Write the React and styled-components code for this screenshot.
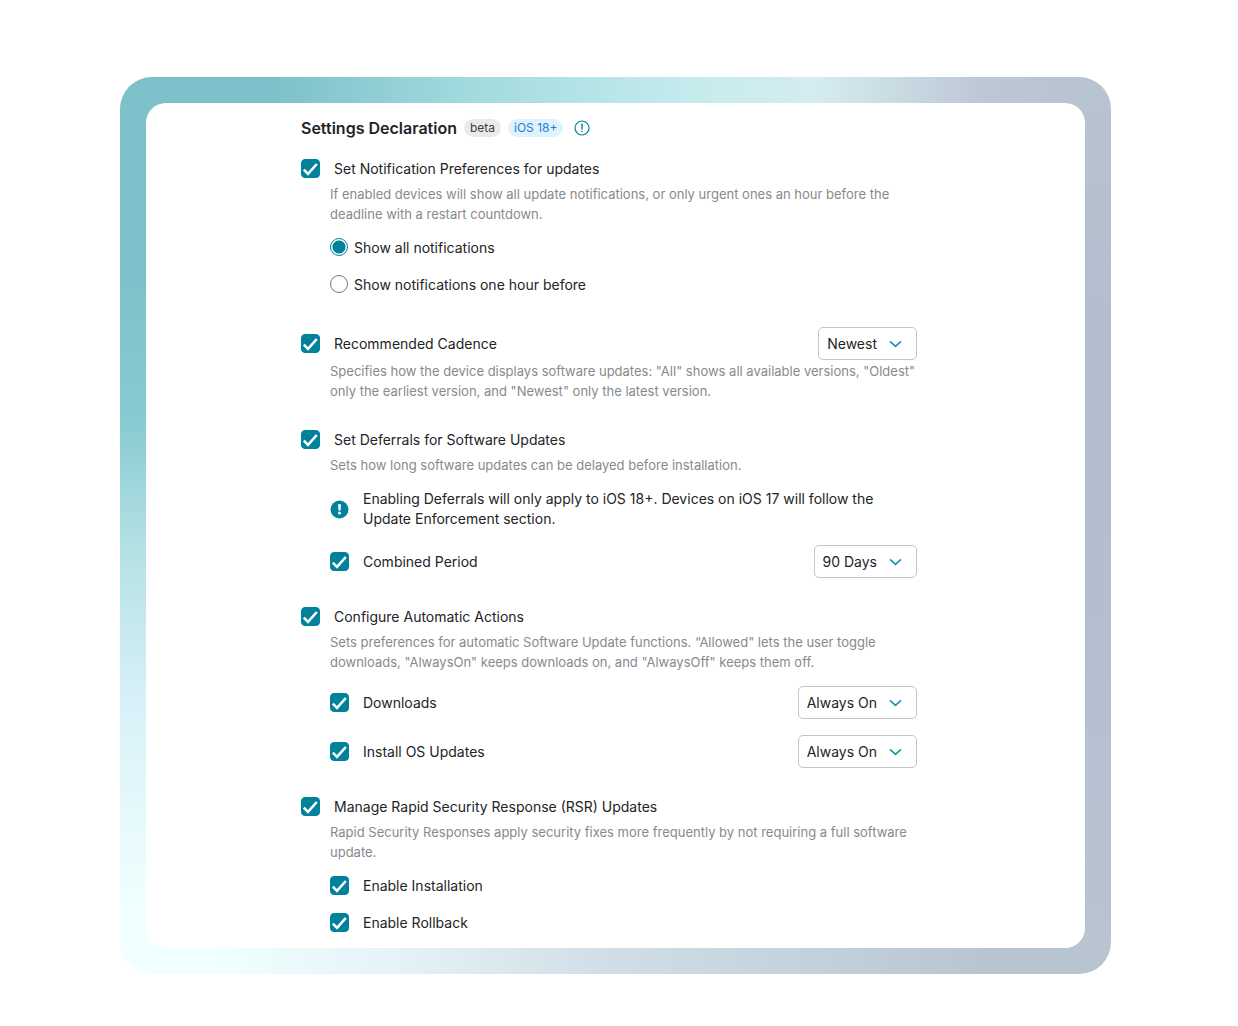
import React, { useId } from "react";
import styled, { createGlobalStyle, css } from "styled-components";

const teal = "#01829b";

const GlobalStyle = createGlobalStyle`
  *, *::before, *::after { box-sizing: border-box; }
  body {
    margin: 0;
    background: #fff;
    color: #222426;
    font: 400 14px/20px Inter, "Liberation Sans", sans-serif;
  }
`;

const Page = styled.main`
  padding: 77px 127px 52px 120px;
`;

const Frame = styled.div`
  padding: 26px;
  border-radius: 32px;
  background:
    linear-gradient(to right, #7fc1ca 13%, #a2dade 34%, #b6e5e8 48%, #c9ecee 61%, #d4ecf0 72%, #bec8d5 90%, #b9c4d1) 40px 0 / calc(100% - 80px) 40px no-repeat,
    linear-gradient(to right, #f0ffff 10%, #e6f3f9 27%, #d2dfe8 48%, #c2d0db 72%, #b9c4d1 88%) 0 100% / 100% 40px no-repeat,
    linear-gradient(to bottom, #7fc1ca 22%, #87cad1 38%, #b3e0e4 52%, #d8f1f8 70%, #f0ffff 92%) 0 0 / 40px 100% no-repeat,
    linear-gradient(to bottom, #b9c4d1, #b2bdce 28%, #b3bfd0 60%, #b9c4d1) 100% 0 / 40px 100% no-repeat;
`;

const Panel = styled.form`
  padding: 16px 168px 12px 155px;
  border-radius: 20px;
  background: #fff;
`;

const Header = styled.header`
  display: flex;
  align-items: center;
  gap: 7px;
  height: 18px;
  margin-bottom: 22px;
`;

const Title = styled.h1`
  margin: 0;
  font-size: 16px;
  font-weight: 600;
`;

const Badge = styled.span`
  padding: 0 6px;
  border-radius: 9px;
  font-size: 12px;
  line-height: 18px;
  color: ${(p) => (p.$info ? "#1b80cf" : "#3b3d3f")};
  background: ${(p) => (p.$info ? "#dff2fe" : "#e9eaea")};
`;

const InfoButton = styled.button`
  display: flex;
  margin: 0 0 0 4px;
  padding: 0;
  border: 0;
  background: none;
  color: ${teal};
`;

const Sections = styled.div`
  display: grid;
  gap: 29px;
`;

const Description = styled.p`
  margin: ${(p) => (p.$tight ? "1px" : "5px")} 0 0 29px;
  font-size: 13px;
  color: #878a8d;
`;

const Children = styled.div`
  display: grid;
  gap: ${(p) => (p.$roomy ? "17px" : "16px")};
  margin: 14px 0 0 29px;
  padding-bottom: ${(p) => (p.$roomy ? "3px" : "0")};
`;

const Row = styled.div`
  display: flex;
  align-items: center;
  justify-content: space-between;
`;

const OptionLabel = styled.label`
  display: flex;
  align-items: flex-start;
  gap: ${(p) => (p.$radio ? "6px" : "14px")};
`;

const stacked = css`
  grid-area: 1 / 1;
`;

const Stack = styled.span`
  display: grid;
  align-items: center;
  flex: none;
`;

const CheckInput = styled.input`
  ${stacked}
  appearance: none;
  width: 19px;
  height: 19px;
  margin: 0;
  border: 1px solid ${teal};
  border-radius: 4px;
  &:checked { background: ${teal}; }
  &:not(:checked) + svg { display: none; }
`;

const CheckMark = styled.svg`
  ${stacked}
  pointer-events: none;
`;

const RadioInput = styled.input`
  appearance: none;
  flex: none;
  width: 18px;
  height: 18px;
  margin: 0;
  border: 1px solid #74787b;
  border-radius: 50%;
  &:checked {
    border-color: ${teal};
    background: radial-gradient(circle, ${teal} 6px, #fff 7px);
  }
`;

const SelectInput = styled.select`
  ${stacked}
  appearance: none;
  field-sizing: content;
  height: 33px;
  margin: 0;
  padding: 0 39px 0 8px;
  border: 1px solid #c3c5c7;
  border-radius: 5px;
  background: #fff;
  color: inherit;
  font: inherit;
`;

const Chevron = styled.svg`
  ${stacked}
  justify-self: end;
  margin-right: 15px;
  pointer-events: none;
`;

const Notice = styled.div`
  display: flex;
  align-items: center;
  gap: 14px;
`;

const NoticeIcon = styled.svg`
  flex: none;
`;

const NoticeText = styled.p`
  margin: 0;
`;

function Check({ children }) {
  return (
    <OptionLabel>
      <Stack>
        <CheckInput type="checkbox" defaultChecked />
        <CheckMark width="19" height="19" viewBox="0 0 19 19" fill="none" aria-hidden="true">
          <path d="M2.8 10.6 7 14.8 15.8 5" stroke="#fff" strokeWidth="2.6" />
        </CheckMark>
      </Stack>
      {children}
    </OptionLabel>
  );
}

function Radio({ children, ...rest }) {
  return (
    <OptionLabel $radio>
      <RadioInput type="radio" name="notifications" {...rest} />
      {children}
    </OptionLabel>
  );
}

function Select({ label, value, options }) {
  const id = useId();
  return (
    <Stack>
      <SelectInput id={id} aria-label={label} defaultValue={value}>
        {options.map((o) => (
          <option key={o}>{o}</option>
        ))}
      </SelectInput>
      <Chevron width="13" height="8" viewBox="0 0 13 8" fill="none" aria-hidden="true">
        <path d="M1 1.3 6.5 6.3 12 1.3" stroke="#1b93a8" strokeWidth="1.6" />
      </Chevron>
    </Stack>
  );
}

const automatic = ["Allowed", "Always On", "Always Off"];

export default function App() {
  return (
    <Page>
      <GlobalStyle />
      <Frame>
        <Panel>
          <Header>
            <Title>Settings Declaration</Title>
            <Badge>beta</Badge>
            <Badge $info>iOS 18+</Badge>
            <InfoButton type="button" aria-label="More information">
              <svg width="16" height="16" viewBox="0 0 16 16" fill="none" aria-hidden="true">
                <circle cx="8" cy="8" r="7" stroke="currentColor" strokeWidth="1.2" />
                <path d="M8 3.6v6M8 10.8v1.5" stroke="currentColor" strokeWidth="1.4" />
              </svg>
            </InfoButton>
          </Header>

          <Sections>
            <section>
              <Row><Check>Set Notification Preferences for updates</Check></Row>
              <Description>
                If enabled devices will show all update notifications, or only urgent ones an hour before the
                deadline with a restart countdown.
              </Description>
              <Children $roomy>
                <Radio defaultChecked>Show all notifications</Radio>
                <Radio>Show notifications one hour before</Radio>
              </Children>
            </section>

            <section>
              <Row>
                <Check>Recommended Cadence</Check>
                <Select label="Recommended Cadence" value="Newest" options={["All", "Oldest", "Newest"]} />
              </Row>
              <Description $tight>
                Specifies how the device displays software updates: "All" shows all available versions, "Oldest"
                only the earliest version, and "Newest" only the latest version.
              </Description>
            </section>

            <section>
              <Row><Check>Set Deferrals for Software Updates</Check></Row>
              <Description>Sets how long software updates can be delayed before installation.</Description>
              <Children>
                <Notice>
                  <NoticeIcon width="19" height="19" viewBox="0 0 19 19" aria-hidden="true">
                    <circle cx="9.5" cy="9.5" r="9" fill={teal} />
                    <path d="M8 4.3h3l-.4 6.2H8.4z" fill="#fff" />
                    <circle cx="9.5" cy="13" r="1.5" fill="#fff" />
                  </NoticeIcon>
                  <NoticeText>
                    Enabling Deferrals will only apply to iOS 18+. Devices on iOS 17 will follow the Update
                    Enforcement section.
                  </NoticeText>
                </Notice>
                <Row>
                  <Check>Combined Period</Check>
                  <Select label="Combined Period" value="90 Days" options={["30 Days", "60 Days", "90 Days"]} />
                </Row>
              </Children>
            </section>

            <section>
              <Row><Check>Configure Automatic Actions</Check></Row>
              <Description>
                Sets preferences for automatic Software Update functions. “Allowed" lets the user toggle
                downloads, "AlwaysOn" keeps downloads on, and "AlwaysOff" keeps them off.
              </Description>
              <Children>
                <Row>
                  <Check>Downloads</Check>
                  <Select label="Downloads" value="Always On" options={automatic} />
                </Row>
                <Row>
                  <Check>Install OS Updates</Check>
                  <Select label="Install OS Updates" value="Always On" options={automatic} />
                </Row>
              </Children>
            </section>

            <section>
              <Row><Check>Manage Rapid Security Response (RSR) Updates</Check></Row>
              <Description>
                Rapid Security Responses apply security fixes more frequently by not requiring a full software
                update.
              </Description>
              <Children $roomy>
                <Check>Enable Installation</Check>
                <Check>Enable Rollback</Check>
              </Children>
            </section>
          </Sections>
        </Panel>
      </Frame>
    </Page>
  );
}
